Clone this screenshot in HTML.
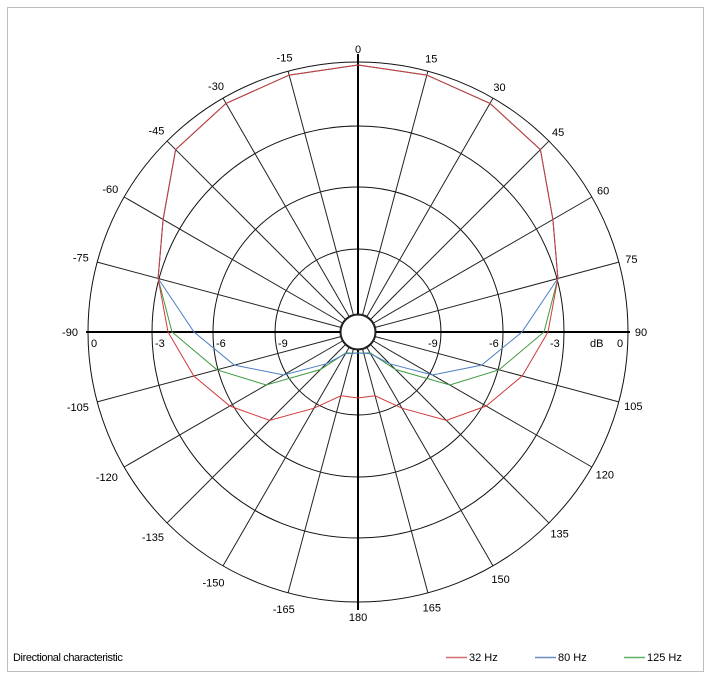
<!DOCTYPE html>
<html><head><meta charset="utf-8"><style>
html,body{margin:0;padding:0;background:#fff;width:710px;height:679px;overflow:hidden}
svg{display:block;font-family:"Liberation Sans",sans-serif;font-size:11px}
</style></head><body>
<svg width="710" height="679" viewBox="0 0 710 679">
<rect x="7.5" y="7.5" width="696" height="664" fill="#fff" stroke="#bdbdbd"/>
<g transform="translate(358,332)" fill="none" stroke="#111" stroke-width="1">
<circle r="270"/><circle r="206"/><circle r="145"/><circle r="83"/><circle r="18"/>
<g stroke="#222">
<line x1="0" y1="-18" x2="0" y2="-270" transform="rotate(15)"/>
<line x1="0" y1="-18" x2="0" y2="-270" transform="rotate(30)"/>
<line x1="0" y1="-18" x2="0" y2="-270" transform="rotate(45)"/>
<line x1="0" y1="-18" x2="0" y2="-270" transform="rotate(60)"/>
<line x1="0" y1="-18" x2="0" y2="-270" transform="rotate(75)"/>
<line x1="0" y1="-18" x2="0" y2="-270" transform="rotate(105)"/>
<line x1="0" y1="-18" x2="0" y2="-270" transform="rotate(120)"/>
<line x1="0" y1="-18" x2="0" y2="-270" transform="rotate(135)"/>
<line x1="0" y1="-18" x2="0" y2="-270" transform="rotate(150)"/>
<line x1="0" y1="-18" x2="0" y2="-270" transform="rotate(165)"/>
<line x1="0" y1="-18" x2="0" y2="-270" transform="rotate(-15)"/>
<line x1="0" y1="-18" x2="0" y2="-270" transform="rotate(-30)"/>
<line x1="0" y1="-18" x2="0" y2="-270" transform="rotate(-45)"/>
<line x1="0" y1="-18" x2="0" y2="-270" transform="rotate(-60)"/>
<line x1="0" y1="-18" x2="0" y2="-270" transform="rotate(-75)"/>
<line x1="0" y1="-18" x2="0" y2="-270" transform="rotate(-105)"/>
<line x1="0" y1="-18" x2="0" y2="-270" transform="rotate(-120)"/>
<line x1="0" y1="-18" x2="0" y2="-270" transform="rotate(-135)"/>
<line x1="0" y1="-18" x2="0" y2="-270" transform="rotate(-150)"/>
<line x1="0" y1="-18" x2="0" y2="-270" transform="rotate(-165)"/>
</g>
<g stroke="#000" stroke-width="2">
<line x1="0" y1="-18" x2="0" y2="-278"/>
<line x1="0" y1="18" x2="0" y2="278"/>
<line x1="-18" y1="0" x2="-272" y2="0"/>
<line x1="18" y1="0" x2="272" y2="0"/>
</g>
</g>
<g fill="none" stroke-width="1">
<g stroke="#3f9a3f">
<polyline points="358,65 426.8,75.1 490,103.4 540.4,149.6 552.9,219.5 557.9,278.4 544,332 499,369.8 449.8,385 395.5,369.5 370,352.8 363.7,353.3 358,353"/>
<polyline transform="translate(716,0) scale(-1,1)" points="358,65 426.8,75.1 490,103.4 540.4,149.6 552.9,219.5 557.9,278.4 544,332 499,369.8 449.8,385 395.5,369.5 370,352.8 363.7,353.3 358,353"/>
</g>
<g stroke="#4a7fc4">
<polyline points="358,65 426.8,75.1 490,103.4 540.4,149.6 552.9,219.5 557.9,278.4 522,332 481.6,365.1 432.5,375 389.8,363.8 370.5,353.7 363.7,353.3 358,353"/>
<polyline transform="translate(716,0) scale(-1,1)" points="358,65 426.8,75.1 490,103.4 540.4,149.6 552.9,219.5 557.9,278.4 522,332 481.6,365.1 432.5,375 389.8,363.8 370.5,353.7 363.7,353.3 358,353"/>
</g>
<g stroke="#d03a3a">
<polyline points="358,65 426.8,75.1 490,103.4 540.4,149.6 552.9,219.5 557.9,278.4 548,332 522.2,376 486.2,406 446.4,420.4 402,408.2 375.1,395.8 358,398"/>
<polyline transform="translate(716,0) scale(-1,1)" points="358,65 426.8,75.1 490,103.4 540.4,149.6 552.9,219.5 557.9,278.4 548,332 522.2,376 486.2,406 446.4,420.4 402,408.2 375.1,395.8 358,398"/>
</g>
</g>
<circle cx="358" cy="332" r="17" fill="#fff" stroke="#111"/>
<g transform="translate(358,332)" fill="#000" text-anchor="middle">
<g transform="rotate(0)"><text transform="translate(0,-283) rotate(0)" dy="4">0</text></g>
<g transform="rotate(15)"><text transform="translate(0,-283) rotate(-15)" dy="4">15</text></g>
<g transform="rotate(30)"><text transform="translate(0,-283) rotate(-30)" dy="4">30</text></g>
<g transform="rotate(45)"><text transform="translate(0,-283) rotate(-45)" dy="4">45</text></g>
<g transform="rotate(60)"><text transform="translate(0,-283) rotate(-60)" dy="4">60</text></g>
<g transform="rotate(75)"><text transform="translate(0,-283) rotate(-75)" dy="4">75</text></g>
<g transform="rotate(90)"><text transform="translate(0,-283) rotate(-90)" dy="4">90</text></g>
<g transform="rotate(105)"><text transform="translate(0,-285) rotate(-105)" dy="4">105</text></g>
<g transform="rotate(120)"><text transform="translate(0,-285) rotate(-120)" dy="4">120</text></g>
<g transform="rotate(135)"><text transform="translate(0,-285) rotate(-135)" dy="4">135</text></g>
<g transform="rotate(150)"><text transform="translate(0,-285) rotate(-150)" dy="4">150</text></g>
<g transform="rotate(165)"><text transform="translate(0,-285) rotate(-165)" dy="4">165</text></g>
<g transform="rotate(180)"><text transform="translate(0,-285) rotate(-180)" dy="4">180</text></g>
<g transform="rotate(-15)"><text transform="translate(0,-284) rotate(15)" dy="4">-15</text></g>
<g transform="rotate(-30)"><text transform="translate(0,-284) rotate(30)" dy="4">-30</text></g>
<g transform="rotate(-45)"><text transform="translate(0,-285) rotate(45)" dy="4">-45</text></g>
<g transform="rotate(-60)"><text transform="translate(0,-286) rotate(60)" dy="4">-60</text></g>
<g transform="rotate(-75)"><text transform="translate(0,-287) rotate(75)" dy="4">-75</text></g>
<g transform="rotate(-90)"><text transform="translate(0,-288) rotate(90)" dy="4">-90</text></g>
<g transform="rotate(-105)"><text transform="translate(0,-290) rotate(105)" dy="4">-105</text></g>
<g transform="rotate(-120)"><text transform="translate(0,-290) rotate(120)" dy="4">-120</text></g>
<g transform="rotate(-135)"><text transform="translate(0,-290) rotate(135)" dy="4">-135</text></g>
<g transform="rotate(-150)"><text transform="translate(0,-289) rotate(150)" dy="4">-150</text></g>
<g transform="rotate(-165)"><text transform="translate(0,-287) rotate(165)" dy="4">-165</text></g>
</g>
<g fill="#000">
<text x="91" y="347">0</text>
<text x="155" y="347">-3</text>
<text x="216" y="347">-6</text>
<text x="278" y="347">-9</text>
<text x="428" y="347">-9</text>
<text x="489" y="347">-6</text>
<text x="550" y="347">-3</text>
<text x="590" y="347">dB</text>
<text x="617" y="347">0</text>
</g>
<text x="13" y="661" fill="#000" letter-spacing="-0.4">Directional characteristic</text>
<line x1="446" y1="657.5" x2="467" y2="657.5" stroke="#d07070" stroke-width="1.5"/>
<text x="469" y="661">32 Hz</text>
<line x1="535" y1="657.5" x2="556" y2="657.5" stroke="#6a8fc0" stroke-width="1.5"/>
<text x="558" y="661">80 Hz</text>
<line x1="624" y1="657.5" x2="645" y2="657.5" stroke="#60b060" stroke-width="1.5"/>
<text x="647" y="661">125 Hz</text>
</svg>
</body></html>
